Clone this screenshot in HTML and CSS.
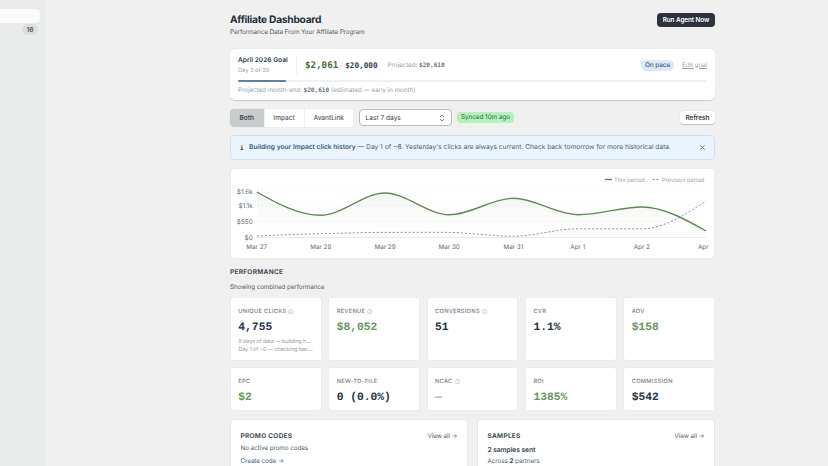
FILE: index.html
```html
<!DOCTYPE html>
<html lang="en">
<head>
    <meta charset="UTF-8">
    <title>Affiliate Dashboard</title>
    <link rel="stylesheet" href="styles.css">
</head>
<body>
    <div class="app">
        <aside class="sidebar">
            <div class="nav-item active"></div>
            <div class="nav-item"><span class="count">16</span></div>
        </aside>
        <main class="container">
            <header class="page-header">
                <div>
                    <h1>Affiliate Dashboard</h1>
                    <p class="subtitle">Performance Data From Your Affiliate Program</p>
                </div>
                <button class="btn-dark">Run Agent Now</button>
            </header>

            <section class="goal">
                <div class="goal-top">
                    <div class="goal-name">
                        <strong>April 2026 Goal</strong>
                        <span>Day 3 of 30</span>
                    </div>
                    <div class="goal-value"><b>$2,061</b><i>/</i><span>$20,000</span></div>
                    <div class="projected">Projected: <b>$20,610</b></div>
                    <span class="pace">On pace</span>
                    <a class="edit">Edit goal</a>
                </div>
                <div class="progress"><div class="bar" style="width: 10.3%"></div></div>
                <p class="goal-note">Projected month-end: <b>$20,610</b> (estimated — early in month)</p>
            </section>

            <div class="filters">
                <div class="tabs">
                    <button class="tab selected">Both</button>
                    <button class="tab">Impact</button>
                    <button class="tab">AvantLink</button>
                </div>
                <div class="select">Last 7 days
                    <svg width="6" height="8" viewBox="0 0 6 8"><path d="M1 3 3 1l2 2M1 5l2 2 2-2"/></svg>
                </div>
                <span class="synced">Synced 10m ago</span>
                <button class="refresh">Refresh</button>
            </div>

            <div class="banner">
                <span class="info">i</span>
                <p><b>Building your Impact click history</b> — Day 1 of ~6. Yesterday's clicks are always current. Check back tomorrow for more historical data.</p>
                <svg width="5" height="5" viewBox="0 0 5 5"><path d="M.4.4l4.2 4.2M4.6.4.4 4.6"/></svg>
            </div>

            <section class="chart">
                <svg width="483" height="89" viewBox="231 169 483 89">
                    <defs>
                        <linearGradient id="fade" x1="0" y1="0" x2="0" y2="1">
                            <stop offset="0" stop-color="#5f7d50" stop-opacity=".07"/>
                            <stop offset="1" stop-color="#5f7d50" stop-opacity="0"/>
                        </linearGradient>
                    </defs>
                    <g class="grid">
                        <path d="M257 189.5H706M257 205.5H706M257 221.5H706"/>
                        <path class="axis" d="M257 237.5H706"/>
                    </g>
                    <path fill="url(#fade)" d="M256.8 192C278 204 299 215.3 320.7 215.3C342 215.3 363 193 385 193C406 193 428 214.8 449.3 214.8C471 214.8 492 198.2 513.6 198.2C535 198.2 556 214.7 578 214.7C599 214.7 621 207 642 207C663 207 685 219 706 231V237.5H256.8Z"/>
                    <path class="prev" d="M256.8 236C278 235.2 299 234.2 320.7 233.7C342 233.2 363 232.4 385 232.4C406 232.4 428 232.3 449.3 232.4C471 232.8 492 236.2 513.6 236.2C535 236.2 556 228.8 578 228.8H642C663 228.8 685 215 706 201"/>
                    <path class="now" d="M256.8 192C278 204 299 215.3 320.7 215.3C342 215.3 363 193 385 193C406 193 428 214.8 449.3 214.8C471 214.8 492 198.2 513.6 198.2C535 198.2 556 214.7 578 214.7C599 214.7 621 207 642 207C663 207 685 219 706 231"/>
                    <g class="legend">
                        <path class="now" d="M605 179.5h7"/>
                        <text x="614" y="182">This period</text>
                        <path class="prev" d="M652.5 179.5h7.5"/>
                        <text x="661.8" y="182">Previous period</text>
                    </g>
                    <g class="ylabels">
                        <text x="252.7" y="193.7">$1.6k</text>
                        <text x="252.7" y="208">$1.1k</text>
                        <text x="252.7" y="223.7">$550</text>
                        <text x="252.7" y="239.7">$0</text>
                    </g>
                    <g class="xlabels">
                        <text x="256.7" y="248.8">Mar 27</text>
                        <text x="320.8" y="248.8">Mar 28</text>
                        <text x="385" y="248.8">Mar 29</text>
                        <text x="449.2" y="248.8">Mar 30</text>
                        <text x="513.4" y="248.8">Mar 31</text>
                        <text x="577.8" y="248.8">Apr 1</text>
                        <text x="641.8" y="248.8">Apr 2</text>
                        <text x="703.3" y="248.8">Apr</text>
                    </g>
                </svg>
            </section>

            <h2>PERFORMANCE</h2>
            <p class="showing">Showing combined performance</p>

            <section class="stats">
                <div class="stat">
                    <h3>UNIQUE CLICKS <svg class="hint" viewBox="0 0 6 6"><circle cx="3" cy="3" r="2.4"/><path d="M3 2.7v1.6M3 1.6v.4"/></svg></h3>
                    <div class="value">4,755</div>
                    <p>9 days of data — building h…</p>
                    <p>Day 1 of ~6 — checking bac…</p>
                </div>
                <div class="stat">
                    <h3>REVENUE <svg class="hint" viewBox="0 0 6 6"><circle cx="3" cy="3" r="2.4"/><path d="M3 2.7v1.6M3 1.6v.4"/></svg></h3>
                    <div class="value green">$8,052</div>
                </div>
                <div class="stat">
                    <h3>CONVERSIONS <svg class="hint" viewBox="0 0 6 6"><circle cx="3" cy="3" r="2.4"/><path d="M3 2.7v1.6M3 1.6v.4"/></svg></h3>
                    <div class="value">51</div>
                </div>
                <div class="stat">
                    <h3>CVR</h3>
                    <div class="value">1.1%</div>
                </div>
                <div class="stat">
                    <h3>AOV</h3>
                    <div class="value green">$158</div>
                </div>
                <div class="stat">
                    <h3>EPC</h3>
                    <div class="value green">$2</div>
                </div>
                <div class="stat">
                    <h3>NEW-TO-FILE</h3>
                    <div class="value">0 (0.0%)</div>
                </div>
                <div class="stat">
                    <h3>NCAC <svg class="hint" viewBox="0 0 6 6"><circle cx="3" cy="3" r="2.4"/><path d="M3 2.7v1.6M3 1.6v.4"/></svg></h3>
                    <div class="value muted">—</div>
                </div>
                <div class="stat">
                    <h3>ROI</h3>
                    <div class="value green">1385%</div>
                </div>
                <div class="stat">
                    <h3>COMMISSION</h3>
                    <div class="value">$542</div>
                </div>
            </section>

            <section class="panels">
                <div class="panel">
                    <div class="panel-head"><h2>PROMO CODES</h2><a>View all →</a></div>
                    <p>No active promo codes</p>
                    <a class="create">Create code →</a>
                </div>
                <div class="panel">
                    <div class="panel-head"><h2>SAMPLES</h2><a>View all →</a></div>
                    <p class="sent">2 samples sent</p>
                    <p class="across">Across <b>2</b> partners</p>
                </div>
            </section>
        </main>
    </div>
</body>
</html>
```

FILE: styles.css
```css
* {
    box-sizing: border-box;
}
body {
    margin: 0;
    background: #f0f0f0;
    font-family: Inter, sans-serif;
    font-size: 6.5px;
    color: #53626c;
    overflow: hidden;
    text-rendering: geometricPrecision;
}
h1, h2, h3, p {
    margin: 0;
}
button {
    font-family: inherit;
    border: none;
    padding: 0;
}
.app {
    display: flex;
    height: 466px;
    overflow: hidden;
}
.sidebar {
    width: 46px;
    flex: none;
    padding: 9px 5px 0 0;
    background: #eaeceb;
    border-right: 1px solid #eeefef;
}
.nav-item {
    height: 14px;
    text-align: right;
}
.nav-item.active {
    background: #fafaf8;
    border-radius: 0 4px 4px 0;
    margin-bottom: 1px;
}
.count {
    display: inline-block;
    width: 16px;
    margin-right: 2px;
    line-height: 11px;
    border-radius: 6px;
    background: #dcdfde;
    color: #4e5a5e;
    font-size: 6.8px;
    font-weight: 600;
    text-align: center;
}
.container {
    width: 485px;
    flex: none;
    margin-left: 184px;
}
.page-header {
    display: flex;
    justify-content: space-between;
    height: 49px;
    padding-top: 12.5px;
}
h1 {
    font-size: 10.2px;
    line-height: 14px;
    font-weight: 700;
    letter-spacing: -.25px;
    color: #232d38;
}
.subtitle {
    font-size: 6.4px;
    line-height: 10px;
    letter-spacing: -.12px;
    color: #55605b;
}
.btn-dark {
    width: 58px;
    height: 14px;
    border-radius: 4px;
    background: #2d323c;
    color: #fff;
    font-size: 6.4px;
    font-weight: 600;
    letter-spacing: -.08px;
}
.goal {
    height: 50.5px;
    padding: 5px 8px 0;
    border-radius: 5px;
    background: #fff;
    box-shadow: 0 .5px 1px rgba(0, 0, 0, .15);
}
.goal-top {
    display: flex;
    align-items: center;
    height: 22px;
}
.goal-name {
    width: 59px;
    height: 20px;
    border-right: 1px solid #f2f3f4;
    white-space: nowrap;
}
.goal-name strong {
    display: block;
    line-height: 10px;
    font-size: 6.6px;
    font-weight: 600;
    color: #303c4c;
}
.goal-name span {
    display: block;
    line-height: 11px;
    font-size: 5.7px;
    color: #939ca4;
}
.goal-value {
    display: flex;
    align-items: center;
    margin-left: 8px;
    font-family: "DejaVu Sans Mono", monospace;
}
.goal-value b {
    font-size: 9.2px;
    color: #4b6840;
}
.goal-value i {
    width: 7px;
    text-align: center;
    font: 6.5px Inter, sans-serif;
    color: #c8cdd2;
}
.goal-value span {
    font-size: 7.7px;
    font-weight: 700;
    color: #354254;
}
.projected {
    margin-left: 10px;
    font-size: 6.2px;
    color: #959ea7;
}
.projected b, .goal-note b {
    font-family: "DejaVu Sans Mono", monospace;
    font-size: 6.1px;
    color: #66737f;
}
.pace {
    margin-left: auto;
    width: 33px;
    line-height: 11px;
    border-radius: 6px;
    background: #dce8f6;
    text-align: center;
    font-size: 6.5px;
    font-weight: 500;
    letter-spacing: -.1px;
    color: #3d5a80;
}
.edit {
    margin-left: 8px;
    font-size: 6.1px;
    color: #989fa7;
    text-decoration: underline;
}
.progress {
    height: 2px;
    margin-top: 4px;
    border-radius: 1px;
    background: #f0f1f2;
}
.bar {
    height: 2px;
    border-radius: 1px;
    background: #5f80a6;
}
.goal-note {
    margin-top: 3.5px;
    line-height: 9px;
    font-size: 6.2px;
    color: #939ca4;
}
.filters {
    display: flex;
    align-items: center;
    height: 18px;
    margin-top: 9px;
}
.tabs {
    display: flex;
    width: 123px;
    height: 18px;
    border-radius: 4px;
    overflow: hidden;
    background: #fff;
    box-shadow: 0 0 0 .5px #e3e6e5;
}
.tab {
    width: 40px;
    background: #fff;
    border-right: 1px solid #eff1f1;
    font-size: 6.5px;
    font-weight: 500;
    color: #4d5961;
}
.tab:first-child {
    width: 34.5px;
}
.tab:last-child {
    flex: 1;
    border: none;
}
.tab.selected {
    background: #c8cccd;
    font-weight: 600;
    color: #3d474c;
}
.select {
    display: flex;
    align-items: center;
    justify-content: space-between;
    width: 92.5px;
    height: 17px;
    margin-left: 6px;
    padding: 0 5.5px;
    border: 1px solid #b6bcbc;
    border-radius: 4px;
    background: #fff;
    font-size: 6.6px;
    color: #36424c;
}
.select svg, .banner svg {
    fill: none;
    stroke: #5c6770;
    stroke-width: .8;
}
.synced {
    width: 57px;
    margin-left: 5.5px;
    line-height: 11px;
    border-radius: 4px;
    background: #b1f3ba;
    color: #386149;
    text-align: center;
    font-size: 6.4px;
    letter-spacing: -.05px;
}
.refresh {
    width: 35px;
    height: 13px;
    margin-left: auto;
    border-radius: 4px;
    background: #fff;
    box-shadow: 0 .5px 1px rgba(0, 0, 0, .2);
    font-size: 6.4px;
    font-weight: 600;
    color: #353b3e;
}
.banner {
    display: flex;
    align-items: center;
    height: 25px;
    margin-top: 8.5px;
    padding: 0 9px;
    border: 1px solid #cfe2f3;
    border-radius: 4px;
    background: #ebf3fd;
}
.banner p {
    flex: 1;
    padding-bottom: 1px;
    font-size: 6.65px;
    white-space: nowrap;
    color: #4a5e75;
}
.banner b {
    font-weight: 600;
    color: #385b86;
}
.info {
    width: 9px;
    padding-top: 2px;
    font: bold 6px "DejaVu Sans Mono", monospace;
    color: #333f4c;
}
.chart {
    height: 91px;
    margin-top: 7.5px;
    border: 1px solid #e9eaea;
    border-radius: 4px;
    background: #fff;
}
.chart svg {
    display: block;
}
.grid path {
    stroke: #f4f5f5;
    stroke-dasharray: 2 2;
}
.grid .axis {
    stroke: #e8eaeb;
    stroke-dasharray: none;
}
.now {
    fill: none;
    stroke: #64875a;
    stroke-width: 1.4;
}
.prev {
    fill: none;
    stroke: #9098aa;
    stroke-width: 1;
    stroke-dasharray: 2.2 1.8;
}
.legend text {
    font-size: 5.75px;
    fill: #9ca3a7;
}
.ylabels text {
    font-size: 6.4px;
    fill: #5d6973;
    text-anchor: end;
}
.xlabels text {
    font-size: 6.3px;
    fill: #5d6973;
    text-anchor: middle;
}
h2 {
    margin-top: 8.5px;
    font-size: 6.5px;
    line-height: 11px;
    font-weight: 700;
    letter-spacing: .28px;
    color: #414c54;
}
.showing {
    margin-top: 4px;
    line-height: 10px;
    font-size: 6.3px;
    letter-spacing: -.1px;
    color: #59635f;
}
.stats {
    display: grid;
    grid-template-columns: repeat(5, 1fr);
    grid-template-rows: 64px 44px;
    gap: 6px 6.8px;
    margin-top: 4.5px;
}
.stat {
    min-width: 0;
    padding: 9px 7.3px 0;
    border: 1px solid #ebecec;
    border-radius: 3px;
    background: #fff;
}
.stat h3 {
    display: flex;
    align-items: center;
    gap: 2px;
    height: 10px;
    font-size: 5.7px;
    font-weight: 500;
    letter-spacing: .3px;
    color: #707c86;
}
.hint {
    width: 5.5px;
    height: 5.5px;
    fill: none;
    stroke: #a5adb3;
    stroke-width: .6;
}
.value {
    margin-top: 4px;
    line-height: 14px;
    font-family: "Liberation Mono", monospace;
    font-size: 11.3px;
    font-weight: 700;
    white-space: pre;
    color: #263344;
}
.value.green {
    color: #6c945f;
}
.value.muted {
    color: #9aa9b5;
}
.stat p {
    line-height: 8px;
    font-size: 5.5px;
    letter-spacing: -.12px;
    white-space: nowrap;
    color: #939ca4;
}
.value + p {
    margin-top: 3px;
}
.panels {
    display: grid;
    grid-template-columns: 1fr 1fr;
    gap: 9px;
    margin-top: 8.5px;
}
.panel {
    height: 80px;
    padding: 10px 9.5px 0;
    border: 1px solid #e7e9e9;
    border-radius: 4px;
    background: #fff;
    line-height: 12.3px;
    font-size: 6.3px;
    letter-spacing: -.07px;
}
.panel-head {
    display: flex;
    justify-content: space-between;
}
.panel-head h2 {
    margin: 0;
    line-height: 12px;
}
.panel .create {
    color: #44617f;
}
.panel .sent {
    margin-top: 3px;
    line-height: 11px;
    font-size: 6.7px;
    font-weight: 600;
    color: #36414a;
}
.panel .across {
    line-height: 11px;
}
.panel p b {
    color: #36414a;
}
```
